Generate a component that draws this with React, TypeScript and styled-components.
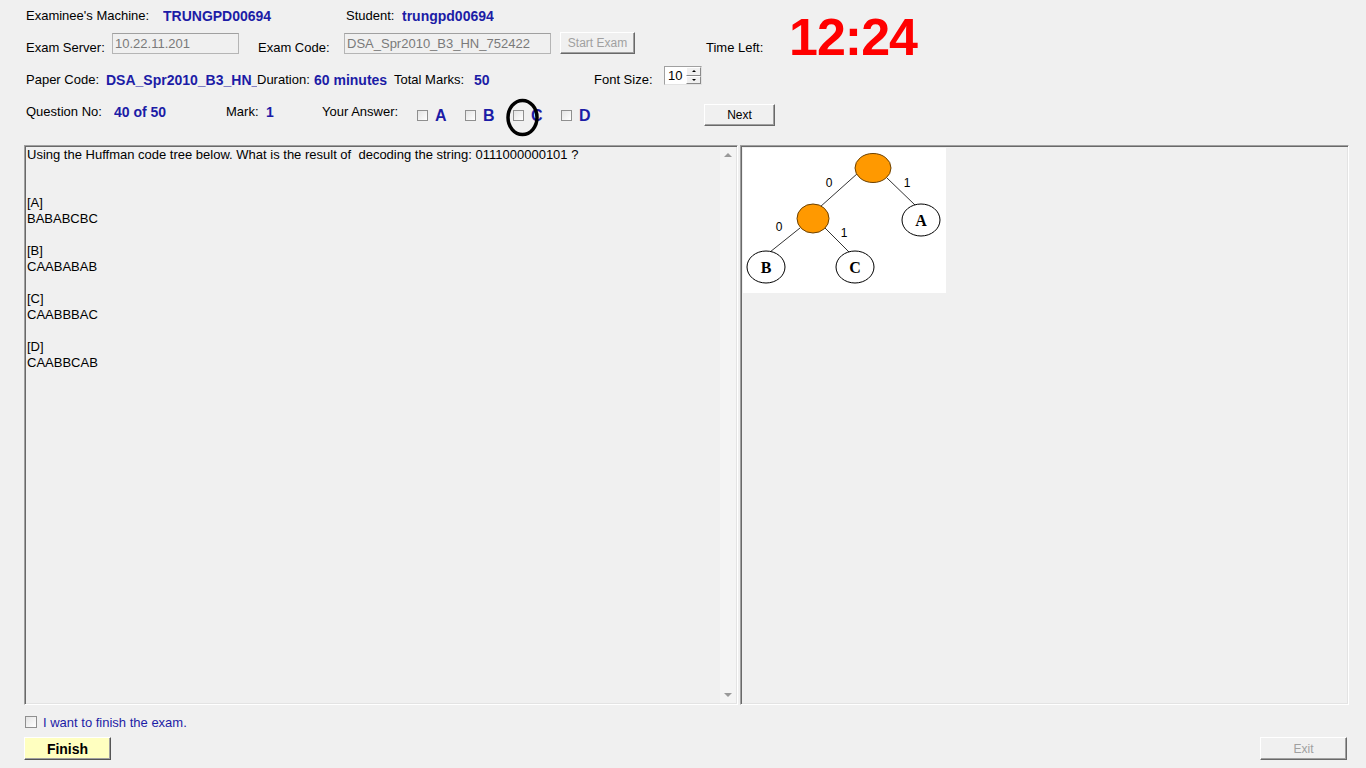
import styled, { createGlobalStyle } from "styled-components";

const GlobalStyle = createGlobalStyle`
  body {
    margin: 0;
    background: #f0f0f0;
    font-family: "Liberation Sans", Arial, sans-serif;
    font-size: 13px;
    color: #000;
  }
`;

const Page = styled.div`
  width: 1366px;
  height: 768px;
  box-sizing: border-box;
  padding: 8px 17px 0 24px;
  overflow: hidden;
`;

const Header = styled.div`
  display: flex;
  padding-left: 2px;
`;

const Fields = styled.div`
  width: 763px;
  display: flex;
  flex-direction: column;
`;

const Row = styled.div<{ $mt?: number; $h: number }>`
  display: flex;
  align-items: flex-start;
  margin-top: ${(p) => p.$mt || 0}px;
  height: ${(p) => p.$h}px;
`;

const Label = styled.span<{ $w?: number; $mt?: number }>`
  flex: none;
  width: ${(p) => (p.$w ? `${p.$w}px` : "auto")};
  margin-top: ${(p) => p.$mt || 0}px;
  line-height: 16px;
  white-space: nowrap;
`;

const Value = styled(Label)`
  font-size: 14px;
  font-weight: bold;
  color: #1c1ca6;
  overflow: hidden;
`;

const TextBox = styled.div<{ $w: number }>`
  flex: none;
  width: ${(p) => p.$w}px;
  height: 21px;
  margin-top: 1px;
  box-sizing: border-box;
  border: 1px solid #b5b5b5;
  border-top-color: #a0a0a0;
  padding: 1px 2px;
  color: #7a7a7a;
  line-height: 17px;
  white-space: nowrap;
`;

const Button = styled.div<{ $w: number; $h?: number; $disabled?: boolean; $bg?: string }>`
  flex: none;
  width: ${(p) => p.$w}px;
  height: ${(p) => p.$h || 22}px;
  box-sizing: border-box;
  display: flex;
  align-items: center;
  justify-content: center;
  background: ${(p) => p.$bg || "#f0f0f0"};
  border: 1px solid;
  border-color: #ffffff #696969 #696969 #ffffff;
  box-shadow: inset -1px -1px 0 #a0a0a0;
  font-size: 12px;
  color: ${(p) => (p.$disabled ? "#a0a0a0" : "#000")};
`;

const FinishButton = styled(Button)`
  font-size: 14px;
  font-weight: bold;
  border-color: #ffffff #555 #555 #ffffff;
`;

const Clock = styled.div`
  margin-top: 3px;
  font-size: 52px;
  line-height: 52px;
  font-weight: bold;
  letter-spacing: -1px;
  color: #ff0000;
`;

const Spin = styled.div`
  flex: none;
  width: 38px;
  height: 19px;
  box-sizing: border-box;
  border: 1px solid #a0a0a0;
  border-right-color: #e3e3e3;
  border-bottom-color: #e3e3e3;
  background: #fff;
  display: flex;
`;

const SpinValue = styled.span`
  flex: 1;
  padding-left: 3px;
  line-height: 17px;
`;

const SpinArrows = styled.div`
  width: 15px;
  display: flex;
  flex-direction: column;
`;

const SpinBtn = styled.div<{ $up?: boolean }>`
  flex: 1;
  background: #f0f0f0;
  border: 1px solid;
  border-color: #fff #8a8a8a #8a8a8a #fff;
  display: flex;
  align-items: center;
  justify-content: center;
  &::after {
    content: "";
    border-left: 2px solid transparent;
    border-right: 2px solid transparent;
    ${(p) => (p.$up ? "border-bottom: 2px solid #000;" : "border-top: 2px solid #000;")}
  }
`;

const Option = styled.div`
  flex: none;
  width: 48px;
  height: 23px;
  display: flex;
  align-items: center;
  position: relative;
`;

const Check = styled.span<{ $size?: number }>`
  flex: none;
  width: ${(p) => p.$size || 11}px;
  height: ${(p) => p.$size || 11}px;
  box-sizing: border-box;
  border: 1px solid #8f8f8f;
  background: linear-gradient(135deg, #e4e4e4, #ffffff);
`;

const OptionLetter = styled.span`
  margin-left: 7px;
  font-size: 16px;
  font-weight: bold;
  color: #1c1ca6;
  line-height: 18px;
`;

const Mark = styled.svg`
  position: absolute;
  left: -7px;
  top: -6px;
`;

const Main = styled.div`
  display: flex;
  margin-top: 18px;
  height: 560px;
`;

const Sunken = styled.div<{ $w: number }>`
  width: ${(p) => p.$w}px;
  box-sizing: border-box;
  border: 1px solid;
  border-color: #a0a0a0 #ffffff #ffffff #a0a0a0;
  box-shadow: inset 1px 1px 0 #696969, inset -1px -1px 0 #e3e3e3;
  padding: 1px;
`;

const TextPanel = styled(Sunken)`
  display: flex;
`;

const QuestionText = styled.div`
  flex: 1;
  padding: 0 0 0 1px;
  line-height: 16px;
  white-space: pre-wrap;
`;

const Scrollbar = styled.div`
  width: 16px;
  background: #f4f4f4;
  display: flex;
  flex-direction: column;
  justify-content: space-between;
  align-items: center;
  padding: 6px 0;
`;

const Arrow = styled.span<{ $down?: boolean }>`
  border-left: 4px solid transparent;
  border-right: 4px solid transparent;
  ${(p) => (p.$down ? "border-top: 4px solid #9a9a9a;" : "border-bottom: 4px solid #9a9a9a;")}
`;

const ImagePanel = styled(Sunken)`
  margin-left: 2px;
`;

const Picture = styled.div`
  width: 203px;
  height: 145px;
  margin: 1px 0 0 1px;
  background: #fff;
`;

const Footer = styled.div`
  margin-top: 10px;
`;

const ConfirmRow = styled.label`
  display: flex;
  align-items: center;
  height: 14px;
  padding-left: 1px;
  gap: 6px;
  color: #1c1ca6;
`;

const ButtonRow = styled.div`
  display: flex;
  justify-content: space-between;
  margin-top: 8px;
  padding-right: 2px;
`;

function HuffmanTree() {
  const line = { stroke: "#333", strokeWidth: 1 };
  const leaf = { fill: "#fff", stroke: "#000", strokeWidth: 1 };
  const inner = { fill: "#ff9900", stroke: "#6b4000", strokeWidth: 1 };
  const letter = {
    fontFamily: '"Liberation Serif", "Times New Roman", serif',
    fontWeight: "bold" as const,
    fontSize: 16,
    textAnchor: "middle" as const,
  };
  const bit = { fontFamily: '"Liberation Sans", Arial, sans-serif', fontSize: 12, textAnchor: "middle" as const };
  return (
    <svg width="203" height="145" viewBox="0 0 203 145">
      <line x1="115" y1="25" x2="77" y2="59" {...line} />
      <line x1="144" y1="30" x2="172" y2="57" {...line} />
      <line x1="57" y1="80" x2="27" y2="104" {...line} />
      <line x1="82" y1="80" x2="107" y2="105" {...line} />
      <ellipse cx="130" cy="20" rx="18" ry="14.5" {...inner} />
      <ellipse cx="70" cy="70.5" rx="16" ry="14.5" {...inner} />
      <ellipse cx="178" cy="72" rx="19" ry="16" {...leaf} />
      <ellipse cx="23" cy="119" rx="19" ry="16" {...leaf} />
      <ellipse cx="112" cy="119" rx="19" ry="16" {...leaf} />
      <text x="178" y="78" {...letter}>A</text>
      <text x="23" y="125" {...letter}>B</text>
      <text x="112" y="125" {...letter}>C</text>
      <text x="86" y="39" {...bit}>0</text>
      <text x="164" y="39" {...bit}>1</text>
      <text x="36" y="83" {...bit}>0</text>
      <text x="101" y="89" {...bit}>1</text>
    </svg>
  );
}

const question = `Using the Huffman code tree below. What is the result of  decoding the string: 0111000000101 ?


[A]
BABABCBC

[B]
CAABABAB

[C]
CAABBBAC

[D]
CAABBCAB`;

export default function App() {
  return (
    <Page>
      <GlobalStyle />
      <Header>
        <Fields>
          <Row $h={16}>
            <Label $w={137}>Examinee's Machine:</Label>
            <Value $w={183}>TRUNGPD00694</Value>
            <Label $w={56}>Student:</Label>
            <Value>trungpd00694</Value>
          </Row>
          <Row $mt={8} $h={24}>
            <Label $w={86} $mt={8}>Exam Server:</Label>
            <TextBox $w={127}>10.22.11.201</TextBox>
            <Label $w={19} />
            <Label $w={86} $mt={8}>Exam Code:</Label>
            <TextBox $w={207}>DSA_Spr2010_B3_HN_752422</TextBox>
            <Label $w={9} />
            <Button $w={75} $disabled>Start Exam</Button>
            <Label $w={71} />
            <Label $mt={8}>Time Left:</Label>
          </Row>
          <Row $mt={10} $h={22}>
            <Label $w={80} $mt={6}>Paper Code:</Label>
            <Value $w={151} $mt={6}>DSA_Spr2010_B3_HN_752422</Value>
            <Label $w={57} $mt={6}>Duration:</Label>
            <Value $w={80} $mt={6}>60 minutes</Value>
            <Label $w={80} $mt={6}>Total Marks:</Label>
            <Value $w={120} $mt={6}>50</Value>
            <Label $w={70} $mt={6}>Font Size:</Label>
            <Spin>
              <SpinValue>10</SpinValue>
              <SpinArrows>
                <SpinBtn $up />
                <SpinBtn />
              </SpinArrows>
            </Spin>
          </Row>
          <Row $mt={16} $h={23}>
            <Label $w={88}>Question No:</Label>
            <Value $w={112}>40 of 50</Value>
            <Label $w={40}>Mark:</Label>
            <Value $w={56}>1</Value>
            <Label $w={95}>Your Answer:</Label>
            <Option>
              <Check />
              <OptionLetter>A</OptionLetter>
            </Option>
            <Option>
              <Check />
              <OptionLetter>B</OptionLetter>
            </Option>
            <Option>
              <Check />
              <OptionLetter>C</OptionLetter>
              <Mark width="34" height="39" viewBox="0 0 34 39">
                <ellipse cx="16.5" cy="19.5" rx="14.5" ry="17" fill="none" stroke="#000" strokeWidth="3.5" />
              </Mark>
            </Option>
            <Option>
              <Check />
              <OptionLetter>D</OptionLetter>
            </Option>
            <Label $w={95} />
            <Button $w={71}>Next</Button>
          </Row>
        </Fields>
        <Clock>12:24</Clock>
      </Header>

      <Main>
        <TextPanel $w={714}>
          <QuestionText>{question}</QuestionText>
          <Scrollbar>
            <Arrow />
            <Arrow $down />
          </Scrollbar>
        </TextPanel>
        <ImagePanel $w={609}>
          <Picture>
            <HuffmanTree />
          </Picture>
        </ImagePanel>
      </Main>

      <Footer>
        <ConfirmRow>
          <Check $size={12} />
          I want to finish the exam.
        </ConfirmRow>
        <ButtonRow>
          <FinishButton $w={87} $h={23} $bg="#ffffc0">Finish</FinishButton>
          <Button $w={87} $h={23} $disabled>Exit</Button>
        </ButtonRow>
      </Footer>
    </Page>
  );
}
